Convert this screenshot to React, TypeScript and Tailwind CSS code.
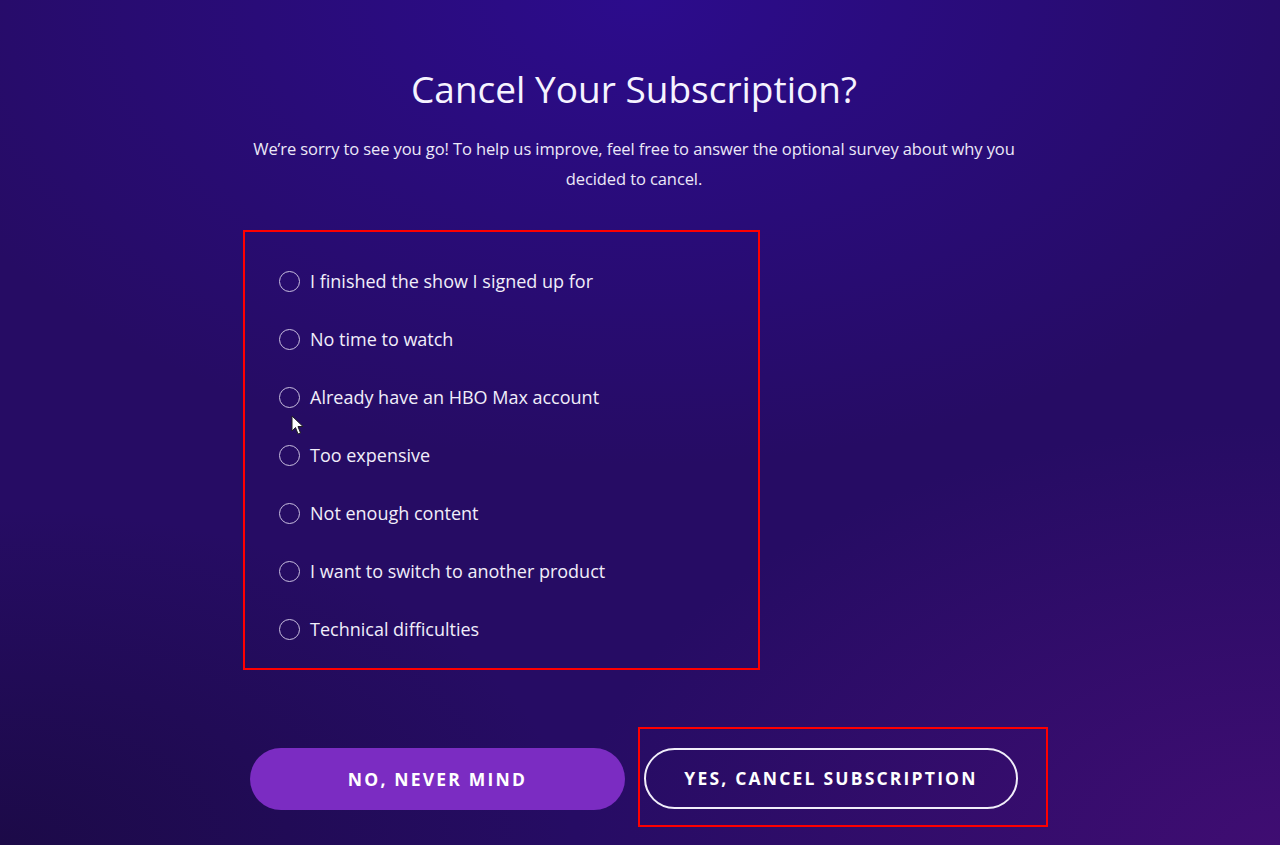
import React from "react";

const reasons = [
  "I finished the show I signed up for",
  "No time to watch",
  "Already have an HBO Max account",
  "Too expensive",
  "Not enough content",
  "I want to switch to another product",
  "Technical difficulties",
];

function Radio({ label }: { label: string }) {
  return (
    <label className="flex h-[58px] items-center gap-[10px] cursor-pointer">
      <span className="h-[21px] w-[21px] rounded-full border-[1.5px] border-[#c9bfe0] shrink-0" />
      <span className="text-[18px] text-[#f1eefa]">{label}</span>
    </label>
  );
}

function Pointer() {
  return (
    <svg
      width="14"
      height="21"
      viewBox="0 0 14 21"
      className="absolute left-[291px] top-[415px]"
    >
      <path
        d="M1 1 L1 16 L4.5 12.5 L7 19 L9.5 18 L7 11.5 L12 11.5 Z"
        fill="#ffffff"
        stroke="#222"
        strokeWidth="1"
        strokeLinejoin="round"
      />
    </svg>
  );
}

export default function App() {
  return (
    <div
      className="relative min-h-[845px] w-full overflow-hidden bg-[#260c64] text-white"
      style={{ fontFamily: '"Open Sans", "Liberation Sans", sans-serif' }}
    >
      {/* layered backdrop glows */}
      <div className="pointer-events-none absolute inset-0 bg-[radial-gradient(ellipse_60%_55%_at_50%_0%,#2c0c8c_0%,rgba(44,12,140,0)_100%)]" />
      <div className="pointer-events-none absolute inset-0 bg-[radial-gradient(ellipse_45%_40%_at_0%_100%,#1c0a48_0%,rgba(28,10,72,0)_100%)]" />
      <div className="pointer-events-none absolute inset-0 bg-[radial-gradient(ellipse_55%_50%_at_100%_100%,#3f0d72_0%,rgba(63,13,114,0)_100%)]" />

      <div className="relative flex justify-center pr-[12px]">
        <div className="flex w-[768px] flex-col items-center pt-[63px]">
          <h1 className="text-[37px] font-normal leading-[52px] text-[#f6f3ff]">
            Cancel Your Subscription?
          </h1>
          <p className="mt-[19px] w-[764px] text-center text-[16.5px] leading-[30px] tracking-[-0.1px] text-[#ece8f8]">
            We’re sorry to see you go! To help us improve, feel free to answer the optional survey about why you decided to cancel.
          </p>

          <div className="mt-[36px] self-start -ml-[7px] h-[440px] w-[517px] border-[2.5px] border-[#ff0000] pl-[34px] pt-[20px]">
            {reasons.map((r) => (
              <Radio key={r} label={r} />
            ))}
          </div>

          <div className="mt-[78px] flex w-full gap-[19px]">
            <button className="h-[62px] w-[375px] rounded-full bg-[#7b2cc2] text-[17.5px] font-bold tracking-[2.2px] text-white">
              NO, NEVER MIND
            </button>
            <div className="relative">
              <button className="h-[61px] w-[374px] rounded-full border-2 border-[#f1eefa] text-[17.5px] font-bold tracking-[2.2px] text-white">
                YES, CANCEL SUBSCRIPTION
              </button>
              <div className="pointer-events-none absolute left-[-6px] top-[-21px] h-[100px] w-[410px] border-[2.5px] border-[#ff0000]" />
            </div>
          </div>
        </div>
      </div>

      <Pointer />
    </div>
  );
}
